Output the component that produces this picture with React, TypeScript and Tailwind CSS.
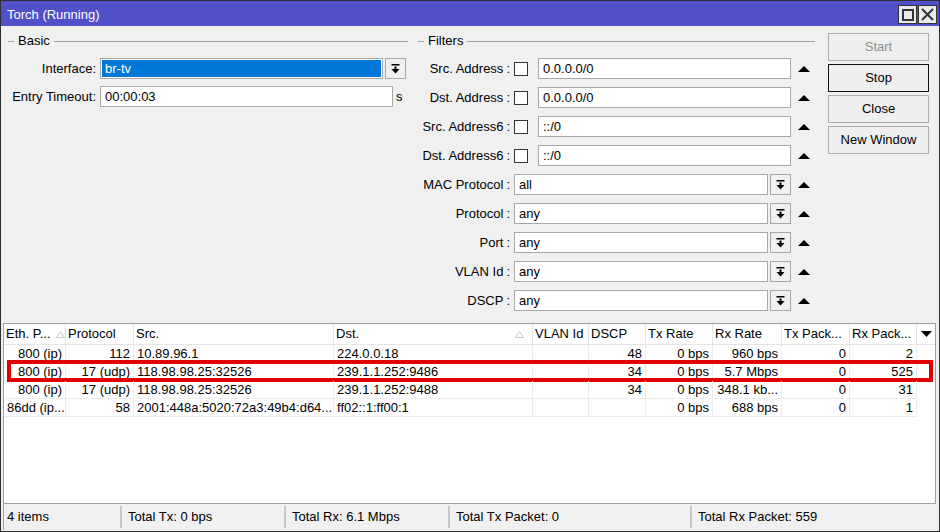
import React from "react"

const rows = [
  ["800 (ip)", "112", "10.89.96.1", "224.0.0.18", "", "48", "0 bps", "960 bps", "0", "2"],
  ["800 (ip)", "17 (udp)", "118.98.98.25:32526", "239.1.1.252:9486", "", "34", "0 bps", "5.7 Mbps", "0", "525"],
  ["800 (ip)", "17 (udp)", "118.98.98.25:32526", "239.1.1.252:9488", "", "34", "0 bps", "348.1 kb...", "0", "31"],
  ["86dd (ip...", "58", "2001:448a:5020:72a3:49b4:d64...", "ff02::1:ff00:1", "", "", "0 bps", "688 bps", "0", "1"],
]

// right aligned columns
const right = [true, true, false, false, true, true, true, true, true, true]

const headers = ["Eth. P...", "Protocol", "Src.", "Dst.", "VLAN Id", "DSCP", "Tx Rate", "Rx Rate", "Tx Pack...", "Rx Pack..."]

const gridCols = "grid grid-cols-[62px_68px_200px_199px_56px_57px_67px_69px_68px_67px_1fr]"

function UpArrow() {
  return (
    <svg width="12" height="6" viewBox="0 0 12 6" className="ml-[7px] shrink-0">
      <polygon points="0,6 6,0 12,6" fill="#000" />
    </svg>
  )
}

function DropBtn() {
  return (
    <div className="w-[21px] h-[21px] ml-[2px] border border-[#a8a8a8] bg-[#f0f0f0] flex items-center justify-center shrink-0">
      <svg width="9" height="10" viewBox="0 0 9 10">
        <rect x="0.5" y="0" width="8" height="1.5" fill="#000" />
        <rect x="3.5" y="2.5" width="2" height="3" fill="#000" />
        <polygon points="0.5,5 8.5,5 4.5,9.5" fill="#000" />
      </svg>
    </div>
  )
}

function SortMark() {
  return (
    <svg width="9" height="7" viewBox="0 0 9 7" className="shrink-0">
      <polygon points="0.5,6.5 4.5,0.5 8.5,6.5" fill="none" stroke="#c8c8c8" strokeWidth="1" />
    </svg>
  )
}

function GroupHeader({ title }: { title: string }) {
  return (
    <div className="flex items-center h-[16px]">
      <div className="w-[6px] h-px bg-[#a0a0a0]" />
      <span className="px-[4px]">{title}</span>
      <div className="flex-1 h-px bg-[#a0a0a0]" />
    </div>
  )
}

function Field({ value, w, selected }: { value: string; w: string; selected?: boolean }) {
  return (
    <div className={`${w} h-[21px] border border-[#a8a8a8] bg-white p-[1px] shrink-0`}>
      <div className={`h-full px-[3px] leading-[17px] ${selected ? "bg-[#0078d7] text-white" : ""}`}>{value}</div>
    </div>
  )
}

function AddrRow({ label, value }: { label: string; value: string }) {
  return (
    <div className="flex items-center h-[21px]">
      <div className="w-[92px] text-right whitespace-nowrap">
        {label}
        <span className="ml-[3px]">:</span>
      </div>
      <div className="w-[14px] h-[14px] ml-[4px] border border-[#333] bg-white shrink-0" />
      <div className="ml-[10px]">
        <Field value={value} w="w-[253px]" />
      </div>
      <UpArrow />
    </div>
  )
}

function ComboRow({ label, value }: { label: string; value: string }) {
  return (
    <div className="flex items-center h-[21px]">
      <div className="w-[92px] text-right whitespace-nowrap">
        {label}
        <span className="ml-[3px]">:</span>
      </div>
      <div className="ml-[4px]">
        <Field value={value} w="w-[254px]" />
      </div>
      <DropBtn />
      <UpArrow />
    </div>
  )
}

function SideButton({ label, disabled, focused }: { label: string; disabled?: boolean; focused?: boolean }) {
  return (
    <div
      className={`h-[28px] flex items-center justify-center border bg-[#efefef] ${
        focused ? "border-[#111]" : "border-[#adadad]"
      } ${disabled ? "text-[#8d8d8d]" : "text-black"}`}
    >
      {label}
    </div>
  )
}

export default function App() {
  return (
    <div className="w-[940px] h-[532px] border border-[#2d2d2d] bg-[#f0f0f0] text-[13px] text-black font-['Liberation_Sans',Arial,sans-serif] flex flex-col overflow-hidden">
      {/* Title bar */}
      <div className="h-[25px] bg-[#5050c9] flex items-center pl-[6px] pr-[2px] shrink-0">
        <span className="text-white pt-[3px]">Torch (Running)</span>
        <div className="ml-auto flex items-center gap-[1px] pt-[2px]">
          <div className="w-[19px] h-[19px] border border-[#333] bg-[#eaeaee] flex items-center justify-center">
            <div className="w-[12px] h-[12px] border-[2px] border-[#333]" />
          </div>
          <div className="w-[19px] h-[19px] border border-[#333] bg-[#eaeaee] flex items-center justify-center">
            <svg width="13" height="13" viewBox="0 0 13 13">
              <path d="M1 1 L12 12 M12 1 L1 12" stroke="#333" strokeWidth="2" />
            </svg>
          </div>
        </div>
      </div>

      {/* Top area */}
      <div className="h-[297px] flex pt-[7px] shrink-0">
        {/* Basic */}
        <div className="ml-[7px] w-[400px]">
          <GroupHeader title="Basic" />
          <div className="mt-[9px] flex flex-col gap-[7px]">
            <div className="flex items-center h-[21px]">
              <div className="w-[88px] text-right">Interface:</div>
              <div className="ml-[4px]">
                <Field value="br-tv" w="w-[283px]" selected />
              </div>
              <DropBtn />
            </div>
            <div className="flex items-center h-[21px]">
              <div className="w-[88px] text-right whitespace-nowrap">Entry Timeout:</div>
              <div className="ml-[4px]">
                <Field value="00:00:03" w="w-[293px]" />
              </div>
              <span className="ml-[3px]">s</span>
            </div>
          </div>
        </div>

        {/* Filters */}
        <div className="ml-[10px] w-[397px]">
          <GroupHeader title="Filters" />
          <div className="mt-[9px] flex flex-col gap-[8px]">
            <AddrRow label="Src. Address" value="0.0.0.0/0" />
            <AddrRow label="Dst. Address" value="0.0.0.0/0" />
            <AddrRow label="Src. Address6" value="::/0" />
            <AddrRow label="Dst. Address6" value="::/0" />
            <ComboRow label="MAC Protocol" value="all" />
            <ComboRow label="Protocol" value="any" />
            <ComboRow label="Port" value="any" />
            <ComboRow label="VLAN Id" value="any" />
            <ComboRow label="DSCP" value="any" />
          </div>
        </div>

        {/* Buttons */}
        <div className="ml-[13px] w-[101px] flex flex-col gap-[3px]">
          <SideButton label="Start" disabled />
          <SideButton label="Stop" focused />
          <SideButton label="Close" />
          <SideButton label="New Window" />
        </div>
      </div>

      {/* Table */}
      <div className="ml-[2px] mr-[3px] h-[181px] border border-[#a0a0a0] bg-white shrink-0 flex flex-col">
        <div className={`${gridCols} h-[21px] border-b border-[#e5e5e5]`}>
          {headers.map((h, i) => (
            <div key={h} className="flex items-center px-[2px] border-r border-[#e5e5e5] whitespace-nowrap overflow-hidden">
              <span>{h}</span>
              {i === 0 && (
                <span className="ml-[5px] flex">
                  <SortMark />
                </span>
              )}
              {i === 3 && (
                <span className="ml-auto mr-[6px] flex">
                  <SortMark />
                </span>
              )}
            </div>
          ))}
          <div className="flex items-center justify-center">
            <svg width="11" height="6" viewBox="0 0 11 6">
              <polygon points="0,0 11,0 5.5,6" fill="#000" />
            </svg>
          </div>
        </div>
        {rows.map((r, ri) => (
          <div key={ri} className={`${gridCols} h-[18px] relative`}>
            {r.map((c, ci) => (
              <div
                key={ci}
                className={`px-[3px] leading-[17px] border-r border-b border-[#ececec] whitespace-nowrap overflow-hidden ${
                  right[ci] && c.indexOf("...") < 0 ? "text-right" : "text-left"
                } ${ci === 7 && c.indexOf("...") >= 0 ? "text-right" : ""}`}
              >
                {c}
              </div>
            ))}
            <div />
            {ri === 1 && (
              <div className="absolute left-[3px] right-[2px] top-[-3px] h-[22px] border-[4px] border-[#e10000] pointer-events-none" />
            )}
          </div>
        ))}
      </div>

      {/* Status bar */}
      <div className="ml-[2px] mr-[3px] h-[26px] flex items-stretch border-l border-[#a0a0a0] shrink-0">
        <div className="w-[116px] flex items-center pl-[3px]">4 items</div>
        <div className="w-[164px] flex items-center pl-[6px] border-l-2 border-[#c8c8c8] my-[2px]">Total Tx: 0 bps</div>
        <div className="w-[164px] flex items-center pl-[6px] border-l-2 border-[#c8c8c8] my-[2px]">Total Rx: 6.1 Mbps</div>
        <div className="w-[242px] flex items-center pl-[6px] border-l-2 border-[#c8c8c8] my-[2px]">Total Tx Packet: 0</div>
        <div className="flex-1 flex items-center pl-[6px] border-l-2 border-[#c8c8c8] my-[2px]">Total Rx Packet: 559</div>
      </div>
    </div>
  )
}
